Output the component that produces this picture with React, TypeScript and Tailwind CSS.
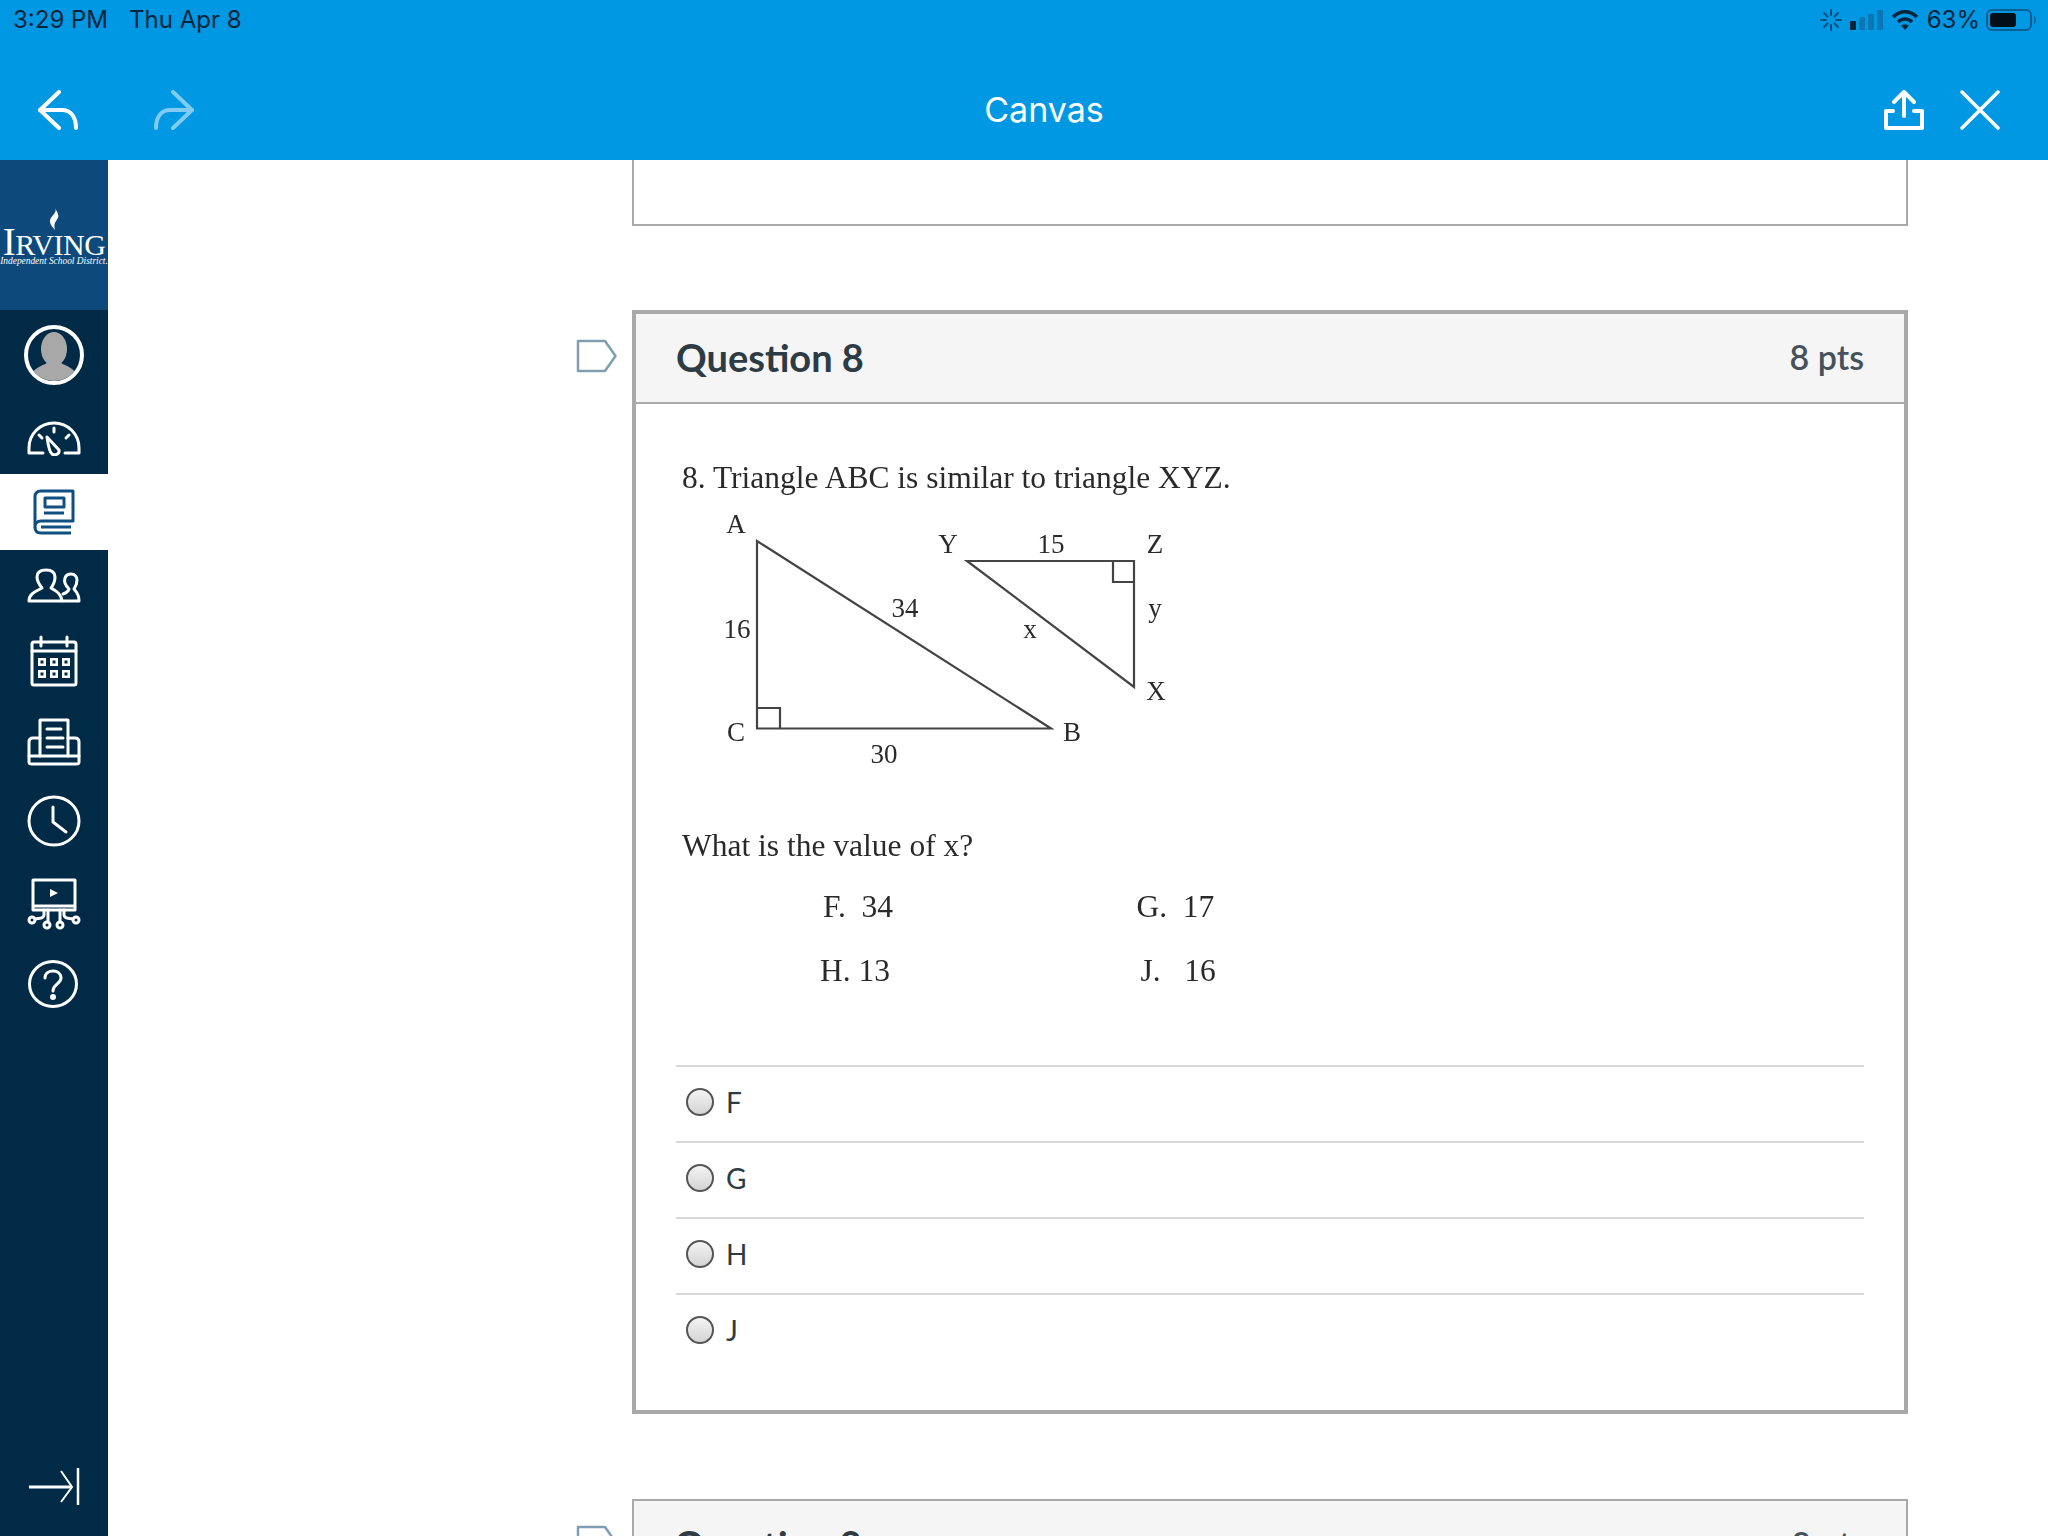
import React from "react";

const W = { fill: "none", stroke: "#fff", strokeWidth: 3, strokeLinecap: "round" as const, strokeLinejoin: "round" as const };

function Flag() {
  return (
    <svg width="42" height="34" viewBox="0 0 42 34" className="shrink-0">
      <path d="M2 2 H29 L39.5 17 L29 32 H2 Z" fill="#fff" stroke="#7f9fb0" strokeWidth="2.5" strokeLinejoin="round" />
    </svg>
  );
}

function Header({ title, pts }: { title: string; pts: string }) {
  return (
    <div className="flex h-[90px] items-center justify-between border-b-[2px] border-[#a9a9a9] bg-[#f5f5f5] pb-[2px] pl-[40px] pr-[40px] text-[#2d3b45]">
      <span className="text-[38px] font-bold leading-none">{title}</span>
      <span className="text-[34px] font-semibold leading-none text-[#46525b]">{pts}</span>
    </div>
  );
}

function Answer({ label }: { label: string }) {
  return (
    <div className="flex h-[76px] items-center gap-[12px] border-t-[2px] border-[#d8d8d8] pb-[4px] pl-[10px] text-[28px] leading-none text-[#2d3b45]">
      <span className="h-[28px] w-[28px] shrink-0 rounded-full border-[2px] border-[#555] bg-gradient-to-b from-[#f4f4f4] to-[#d4d4d4]" />
      <span>{label}</span>
    </div>
  );
}

function Diagram() {
  const t = { fontFamily: "'Liberation Serif', serif", fill: "#2a2a2a", textAnchor: "middle" as const };
  const l = { fill: "none", stroke: "#444", strokeWidth: 2.2 };
  return (
    <svg width="480" height="264" viewBox="700 510 480 264" className="blur-[0.4px]">
      <path d="M757 540 V727.5 H1051 Z" {...l} />
      <path d="M757 707 H780 V727.5" {...l} />
      <path d="M967 560 H1134 V686 Z" {...l} />
      <path d="M1113 560 V581 H1134" {...l} />
      <g fontSize="27" {...t}>
        <text x="736" y="532">A</text>
        <text x="948" y="552">Y</text>
        <text x="1155" y="552">Z</text>
        <text x="1156" y="699">X</text>
        <text x="736" y="740">C</text>
        <text x="1072" y="740">B</text>
        <text x="1051" y="552">15</text>
        <text x="905" y="616">34</text>
        <text x="737" y="637">16</text>
        <text x="1030" y="637">x</text>
        <text x="1155" y="616">y</text>
        <text x="884" y="762">30</text>
      </g>
    </svg>
  );
}

function Rail({ h, active, children }: { h: number; active?: boolean; children: React.ReactNode }) {
  return (
    <div className={active ? "flex items-center justify-center bg-white" : "flex items-center justify-center"} style={{ height: h }}>
      {children}
    </div>
  );
}

export default function App() {
  return (
    <div className="flex h-[1536px] w-[2048px] flex-col overflow-hidden bg-white font-['Lato',sans-serif]">
      <header className="h-[160px] shrink-0 bg-[#0097e3]">
        <div className="flex h-[60px] items-start justify-between pl-[13px] pr-[10px] pt-[6px] font-['Inter',sans-serif] text-[24px] leading-[28px] text-[#04253c]">
          <div className="flex gap-[21px]">
            <span>3:29 PM</span>
            <span>Thu Apr 8</span>
          </div>
          <div className="flex items-center gap-[8px]">
            <svg width="22" height="22" viewBox="0 0 22 22" stroke="#0b4f7d" strokeWidth="2" strokeLinecap="round">
              <path d="M11 1v5M11 16v5M1 11h5M16 11h5M4 4l3.5 3.5M14.500 14.500L18 18M18 4l-3.500 3.500M7.500 14.500L4 18" />
            </svg>
            <svg width="33" height="22" viewBox="0 0 33 22">
              <rect x="0" y="12" width="6" height="9" rx="1" fill="#04253c" />
              <rect x="9" y="8" width="6" height="13" rx="1" fill="#0a77b5" />
              <rect x="18" y="5" width="6" height="16" rx="1" fill="#0a77b5" />
              <rect x="27" y="1" width="6" height="20" rx="1" fill="#0a77b5" />
            </svg>
            <svg width="28" height="22" viewBox="0 0 28 22" fill="none" stroke="#04253c" strokeWidth="3.500">
              <path d="M2 8 C9 1 19 1 26 8" />
              <path d="M7 13 C11 9 17 9 21 13" />
              <path d="M14 21 L10 16.500 C12 15 16 15 18 16.500 Z" fill="#04253c" stroke="none" />
            </svg>
            <span className="ml-[0px]">63%</span>
            <svg width="52" height="24" viewBox="0 0 52 24" className="ml-[-2px]">
              <rect x="1" y="2" width="44" height="20" rx="5" fill="none" stroke="#0b5f92" strokeWidth="2" />
              <rect x="4" y="5" width="26" height="14" rx="3" fill="#020f18" />
              <path d="M48 8 C50.500 9 50.500 15 48 16 Z" fill="#0b5f92" />
            </svg>
          </div>
        </div>
        <div className="flex h-[100px] items-center pl-[38px] pr-[48px]">
          <div className="flex w-[946px] shrink-0 items-center gap-[76px]">
            <svg width="40" height="40" viewBox="0 0 40 40" fill="none" stroke="#fff" strokeWidth="4" strokeLinecap="round" strokeLinejoin="round">
              <path d="M21 2 L2 20 L21 38" />
              <path d="M2 20 H24 C32 20 38 26 38 38" />
            </svg>
            <svg width="40" height="40" viewBox="0 0 40 40" fill="none" stroke="#80cbf1" strokeWidth="4" strokeLinecap="round" strokeLinejoin="round">
              <path d="M19 2 L38 20 L19 38" />
              <path d="M38 20 H16 C8 20 2 26 2 38" />
            </svg>
          </div>
          <span className="w-[120px] text-center font-['Inter',sans-serif] text-[34px] leading-none text-white">Canvas</span>
          <div className="ml-auto flex items-center gap-[36px]">
            <svg width="40" height="40" viewBox="0 0 40 40" fill="none" stroke="#fff" strokeWidth="4" strokeLinecap="round" strokeLinejoin="round">
              <path d="M20 26 V3 M10 12 L20 2 L30 12" />
              <path d="M9 21 H2 V38 H38 V21 H30" />
            </svg>
            <svg width="40" height="40" viewBox="0 0 40 40" fill="none" stroke="#fff" strokeWidth="3.500" strokeLinecap="round">
              <path d="M2 2 L38 38 M38 2 L2 38" />
            </svg>
          </div>
        </div>
      </header>

      <div className="flex min-h-0 flex-1">
        <aside className="flex w-[108px] shrink-0 flex-col bg-[#012a47] text-white">
          <div className="flex h-[150px] flex-col items-center justify-end overflow-hidden bg-[#0d4a7b] pb-[44px] font-['Liberation_Serif',serif] leading-none">
            <svg width="14" height="22" viewBox="0 0 14 22" className="mb-[-8px]">
              <path d="M8 0 C11 5 3 8 3 13 C3 17 6 19 8 22 C7 18 7 16 9 13 C11 10 12 9 11 6 C10.500 4 9 2 8 0 Z" fill="#fff" />
            </svg>
            <div className="whitespace-nowrap text-[30px] tracking-[-0.5px]">
              <span className="text-[39px]">I</span>RVING
            </div>
            <div className="mt-[-4px] whitespace-nowrap text-[9.400px] italic">Independent School District.</div>
          </div>
          <Rail h={90}>
            <div className="flex h-[60px] w-[60px] items-end justify-center overflow-hidden rounded-full border-[4px] border-white">
              <svg width="52" height="50" viewBox="0 0 52 50">
                <ellipse cx="26" cy="18" rx="13" ry="17" fill="#a8a8a8" />
                <path d="M2 50 C3 36 14 36 20 31 H32 C38 36 49 36 50 50 Z" fill="#a8a8a8" />
              </svg>
            </div>
          </Rail>
          <Rail h={74}>
            <svg width="54" height="36" viewBox="0 0 54 36" {...W} className="mt-[1px]">
              <path d="M16 33 H2 V28 C2 14 13 3 27 3 C41 3 52 14 52 28 V33 H38" />
              <path d="M27 8 V12 M12 15 L15 18 M42 15 L39 18" />
              <path d="M20 17 L32 30 C33 34 28 36 25 34 C22 32 21 24 20 17 Z" />
            </svg>
          </Rail>
          <Rail h={76} active>
            <svg width="42" height="46" viewBox="0 0 42 46" fill="none" stroke="#0f4f82" strokeWidth="3" strokeLinejoin="round">
              <path d="M8 2 H40 V32 H8 C4 32 2 35 2 38 V8 C2 4 4 2 8 2 Z" />
              <path d="M2 38 C2 42 4 44 8 44 H38 M8 38 H38" />
              <rect x="12" y="9" width="19" height="9" />
              <path d="M11 24 H31" />
            </svg>
          </Rail>
          <Rail h={72}>
            <svg width="54" height="36" viewBox="0 0 54 36" {...W}>
              <path d="M2 33 C2 25 10 23 15 20 C11 15 10 11 10 9 C10 4 14 2 19 2 C24 2 28 4 28 9 C28 12 27 16 24 20 C27 22 34 24 35 33 Z" />
              <path d="M36 26 C39 25 41 24 42 21 C38 17 37 13 38 10 C39 7 42 6 44 6 C48 6 50 9 50 12 C50 15 49 18 47 21 C49 24 52 25 52 33 H36" />
            </svg>
          </Rail>
          <Rail h={78}>
            <svg width="48" height="52" viewBox="0 0 48 52" {...W}>
              <rect x="2" y="7" width="44" height="43" rx="2" />
              <path d="M2 16 H46 M11 2 V11 M37 2 V11" />
              <g fill="#fff" stroke="none">
                <path d="M8 23h8v8H8z M20 23h8v8h-8z M32 23h8v8h-8z M8 35h8v8H8z M20 35h8v8h-8z M32 35h8v8h-8z" />
              </g>
              <g fill="#012a47" stroke="none">
                <rect x="10.500" y="25.500" width="3" height="3" />
                <rect x="22.500" y="25.500" width="3" height="3" />
                <rect x="34.500" y="25.500" width="3" height="3" />
                <rect x="10.500" y="37.500" width="3" height="3" />
                <rect x="22.500" y="37.500" width="3" height="3" />
                <rect x="34.500" y="37.500" width="3" height="3" />
              </g>
            </svg>
          </Rail>
          <Rail h={84}>
            <svg width="54" height="48" viewBox="0 0 54 48" {...W}>
              <path d="M13 20 H6 C3 20 2 22 2 24 V44 C2 46 3 46 5 46 H49 C51 46 52 46 52 44 V24 C52 22 51 20 48 20 H41" />
              <path d="M2 38 H52" />
              <path d="M13 38 V2 H41 V38" />
              <path d="M20 11 H34 M20 20 H36 M20 29 H36" />
            </svg>
          </Rail>
          <Rail h={74}>
            <svg width="54" height="52" viewBox="0 0 54 52" {...W}>
              <ellipse cx="27" cy="26" rx="25" ry="24" />
              <path d="M26 12 V27 L39 37" />
            </svg>
          </Rail>
          <Rail h={92}>
            <svg width="54" height="52" viewBox="0 0 54 52" {...W}>
              <path d="M6 2 H48 V28 H6 Z M6 28 V32 H48 V28" />
              <path d="M23 11 L31 15 L23 19 Z" fill="#fff" stroke="none" />
              <path d="M17 32 V37 C17 41 12 40 8 41 M37 32 V37 C37 41 42 40 46 41 M21 32 V43 M33 32 V43" />
              <circle cx="5" cy="42" r="3" />
              <circle cx="49" cy="42" r="3" />
              <circle cx="20" cy="47" r="3" />
              <circle cx="33" cy="47" r="3" />
            </svg>
          </Rail>
          <Rail h={68}>
            <svg width="50" height="48" viewBox="0 0 50 48" {...W} className="mr-[3px]">
              <ellipse cx="25" cy="24" rx="23.500" ry="22.500" />
              <path d="M17 18 C17 13 21 11 25 11 C30 11 33 14 33 18 C33 24 25 24 25 31" />
              <circle cx="25" cy="37" r="1.500" fill="#fff" />
            </svg>
          </Rail>
          <div className="mt-auto flex h-[98px] items-center justify-center pb-[1px]">
            <svg width="52" height="38" viewBox="0 0 52 38" fill="none" stroke="#fff">
              <path d="M1 19 H44" strokeWidth="3" />
              <path d="M33 3 L44 19 L33 34" strokeWidth="2" />
              <path d="M50 0 V37" strokeWidth="2.500" />
            </svg>
          </div>
        </aside>

        <main className="min-w-0 flex-1 pl-[468px] pr-[140px]">
          <div className="ml-[56px] h-[66px] border-x-[2px] border-b-[2px] border-[#a9a9a9]" />
          <div className="mt-[84px] flex items-start">
            <div className="w-[56px] pt-[29px]">
              <Flag />
            </div>
            <section className="flex-1 border-[4px] border-[#a9a9a9]">
              <Header title="Question 8" pts="8 pts" />
              <div className="h-[1006px] pl-[40px] pr-[40px] pt-[59px] font-['Liberation_Serif',serif] text-[31.5px] leading-[30px] text-[#2a2a2a]">
                <p className="pl-[6px] blur-[0.3px]">8. Triangle ABC is similar to triangle XYZ.</p>
                <div className="ml-[24px] mt-[18px] h-[264px]">
                  <Diagram />
                </div>
                <p className="mt-[56px] pl-[6px] blur-[0.3px]">What is the value of x?</p>
                <div className="mt-[31px] grid w-[540px] grid-cols-2 gap-y-[34px] pl-[147px] blur-[0.3px]">
                  <span>F.&nbsp; 34</span>
                  <span className="pl-[117px]">G.&nbsp; 17</span>
                  <span className="ml-[-3px]">H. 13</span>
                  <span className="pl-[121px]">J.&nbsp;&nbsp; 16</span>
                </div>
                <div className="mt-[79px] font-['Lato',sans-serif]">
                  <Answer label="F" />
                  <Answer label="G" />
                  <Answer label="H" />
                  <Answer label="J" />
                </div>
              </div>
            </section>
          </div>
          <div className="mt-[85px] flex items-start">
            <div className="w-[56px] pt-[26px]">
              <Flag />
            </div>
            <section className="flex-1 border-[2px] border-[#a9a9a9]">
              <Header title="Question 9" pts="8 pts" />
            </section>
          </div>
        </main>
      </div>
    </div>
  );
}
